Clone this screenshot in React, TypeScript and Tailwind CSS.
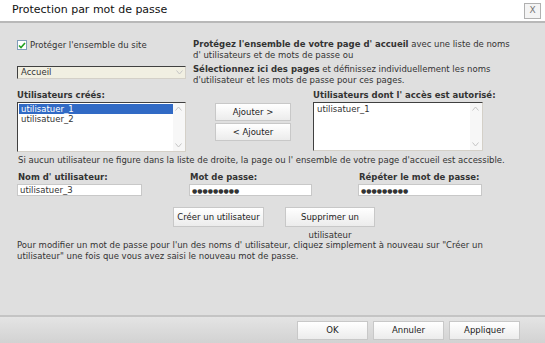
import type { ReactNode } from 'react';

const font = { fontFamily: '"DejaVu Sans", Verdana, sans-serif' };

function Chevron({ up }: { up?: boolean }) {
  return (
    <svg width="7" height="5" viewBox="0 0 7 5" className="block">
      <path d={up ? 'M0.5 4.5 L3.5 1 L6.5 4.5' : 'M0.5 0.5 L3.5 4 L6.5 0.5'} fill="none" stroke="#c4c4c4" strokeWidth="1" />
    </svg>
  );
}

function ListBox({ items, selected, className }: { items: string[]; selected?: number; className: string }) {
  return (
    <div className={`flex border border-t-[#404040] border-l-[#404040] border-r-[#d4d0c8] border-b-[#d4d0c8] bg-white ${className}`}>
      <div className="flex-1 pt-[1px] pl-[1px]">
        {items.map((it, i) => (
          <div key={it} className={`h-[10px] whitespace-nowrap pl-[2px] leading-[10px] ${i === selected ? 'bg-[#316ac5] text-white' : 'text-[#333]'}`}>
            {it}
          </div>
        ))}
      </div>
      <div className="flex w-[12px] flex-col justify-between bg-[#f7f7f7] py-[3px] pl-[2px]">
        <Chevron up />
        <Chevron />
      </div>
    </div>
  );
}

function Btn({ children, className }: { children: ReactNode; className: string }) {
  return (
    <div className={`flex items-center justify-center whitespace-nowrap border border-[#c8c8c8] bg-gradient-to-b from-white to-[#ececec] text-[#222] ${className}`}>
      {children}
    </div>
  );
}

function Field({ value, className }: { value: string; className: string }) {
  return (
    <div className={`h-[12px] border border-[#c8c8c8] bg-white pl-[2px] leading-[11px] text-[#333] ${className}`}>{value}</div>
  );
}

export default function App() {
  return (
    <div className="flex h-[343px] w-[545px] flex-col overflow-hidden bg-white text-[8.5px] text-[#333]" style={font}>
      {/* title bar */}
      <div className="flex h-[23px] items-center justify-between border-b-2 border-[#b8b8b8] bg-white pl-[12px] pr-[4px]">
        <span className="text-[11px] text-[#111]">Protection par mot de passe</span>
        <div className="flex h-[16px] w-[17px] items-center justify-center border border-[#b0b0b0] bg-[#f4f4f4] text-[9px] text-[#777]">X</div>
      </div>

      {/* body */}
      <div className="flex-1 bg-[#dfdfdf] pl-[17px]">
        <div className="mt-[16px] flex">
          <div className="w-[169px]">
            <div className="flex items-center gap-[3px]">
              <div className="flex h-[10px] w-[10px] items-center justify-center border border-[#7f9db9] bg-white">
                <svg width="8" height="7" viewBox="0 0 8 7">
                  <path d="M1 3.5 L3 5.5 L7 1" fill="none" stroke="#21a121" strokeWidth="1.6" />
                </svg>
              </div>
              <span>Protéger l'ensemble du site</span>
            </div>
            <div className="mt-[14px] flex h-[13px] items-center justify-between border border-t-[#404040] border-l-[#404040] border-r-[#d4d0c8] border-b-[#d4d0c8] bg-[#f1efe2] pl-[3px] pr-[2px]">
              <span>Accueil</span>
              <Chevron />
            </div>
          </div>
          <div className="ml-[7px] whitespace-nowrap leading-[11px]">
            <div>
              <b>Protégez l'ensemble de votre page d' accueil</b> avec une liste de noms
              <br />
              d' utilisateurs et de mots de passe ou
            </div>
            <div className="mt-[3px]">
              <b>Sélectionnez ici des pages</b> et définissez individuellement les noms
              <br />
              d'utilisateur et les mots de passe pour ces pages.
            </div>
          </div>
        </div>

        <div className="mt-[4px] flex">
          <div className="w-[169px]">
            <div className="whitespace-nowrap font-bold leading-[11px]">Utilisateurs créés:</div>
            <ListBox items={['utilisatuer_1', 'utilisatuer_2']} selected={0} className="mt-[1px] h-[50px]" />
          </div>
          <div className="ml-[29px] mt-[13px] flex flex-col gap-[2px]">
            <Btn className="h-[18px] w-[76px]">Ajouter &gt;</Btn>
            <Btn className="h-[18px] w-[76px]">&lt; Ajouter</Btn>
          </div>
          <div className="ml-[22px] w-[170px]">
            <div className="whitespace-nowrap font-bold leading-[11px]">Utilisateurs dont l' accès est autorisé:</div>
            <ListBox items={['utilisatuer_1']} className="mt-[1px] h-[49px]" />
          </div>
        </div>

        <div className="mt-[3px] whitespace-nowrap pl-[1px] leading-[11px]">
          Si aucun utilisateur ne figure dans la liste de droite, la page ou l' ensemble de votre page d'accueil est accessible.
        </div>

        <div className="mt-[6px] flex">
          <div className="w-[172px]">
            <div className="pl-[1px] font-bold leading-[11px]">Nom d' utilisateur:</div>
            <Field value="utilisatuer_3" className="mt-[1px] w-[125px]" />
          </div>
          <div className="w-[169px]">
            <div className="pl-[1px] font-bold leading-[11px]">Mot de passe:</div>
            <Field value="●●●●●●●●●" className="mt-[1px] w-[123px] text-[6px]" />
          </div>
          <div>
            <div className="pl-[1px] font-bold leading-[11px]">Répéter le mot de passe:</div>
            <Field value="●●●●●●●●●" className="mt-[1px] w-[124px] text-[6px]" />
          </div>
        </div>

        <div className="mt-[11px] flex pl-[156px]">
          <Btn className="h-[20px] w-[91px]">Créer un utilisateur</Btn>
          <div className="ml-[21px] flex w-[90px] flex-col items-center">
            <Btn className="h-[20px] w-[90px]">Supprimer un</Btn>
            <div className="mt-[5px] leading-[6px]">utilisateur</div>
          </div>
        </div>

        <div className="mt-[2px] whitespace-nowrap leading-[11px]">
          Pour modifier un mot de passe pour l'un des noms d' utilisateur, cliquez simplement à nouveau sur "Créer un
          <br />
          utilisateur" une fois que vous avez saisi le nouveau mot de passe.
        </div>
      </div>

      {/* footer */}
      <div className="flex h-[28px] items-center justify-end gap-[5px] border-t-2 border-[#c4c4c4] bg-gradient-to-b from-[#e4e4e4] to-[#d2d2d2] pr-[25px]">
        <Btn className="h-[19px] w-[71px]">OK</Btn>
        <Btn className="h-[19px] w-[71px]">Annuler</Btn>
        <Btn className="h-[19px] w-[71px]">Appliquer</Btn>
      </div>
    </div>
  );
}
